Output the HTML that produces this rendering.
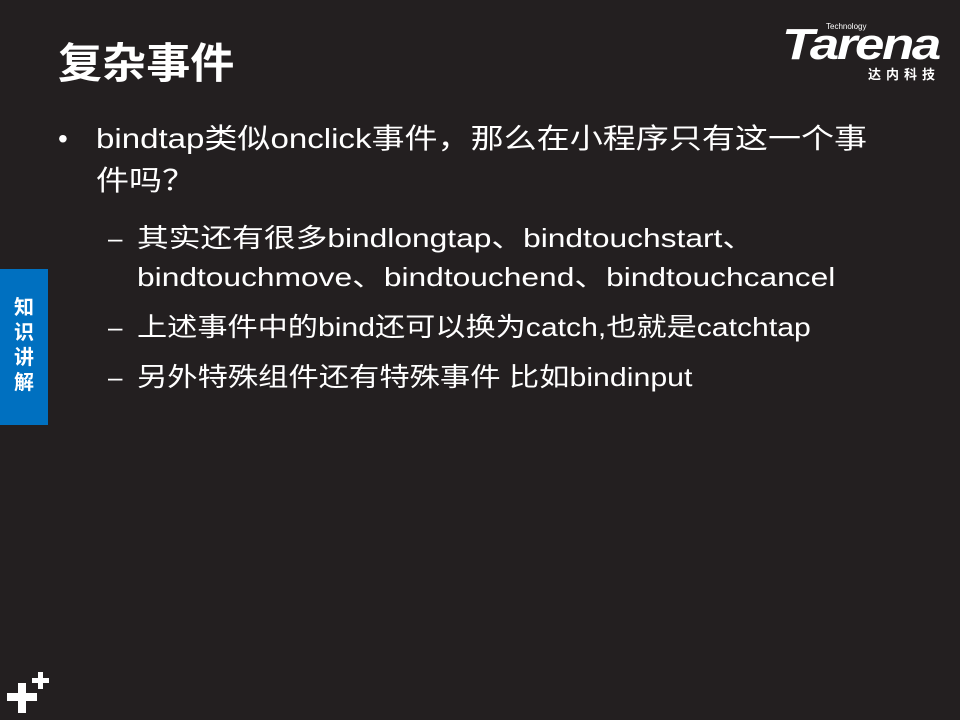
<!DOCTYPE html><html><head><meta charset="utf-8"><style>
html,body{margin:0;padding:0}
body{width:960px;height:720px;background:#231f20;position:relative;overflow:hidden;font-family:"Liberation Sans","Noto Sans CJK SC",sans-serif;color:#fff}
.a{position:absolute;white-space:nowrap}
.t{left:58px;top:38px;font-size:42px;font-weight:bold;line-height:52px;transform:scaleX(1.05);transform-origin:left}
.b{font-size:28px;line-height:38px;transform:scaleX(1.18);transform-origin:left}
.s{font-size:26px;line-height:38px;transform:scaleX(1.22);transform-origin:left}
</style></head><body>
<div class="a t">复杂事件</div>
<div class="a" style="left:782px;top:20px;width:165px;height:60px">
<div class="a" style="left:44px;top:2px;font-size:8px">Technology</div>
<div class="a" style="left:0;top:2px;font-size:44px;font-weight:bold;font-style:italic;letter-spacing:-2px;line-height:46px;transform:scaleX(1.2);transform-origin:left">Tarena</div>
<div class="a" style="left:86px;top:44px;font-size:13px;font-weight:bold;letter-spacing:5px">达内科技</div>
</div>
<div class="a" style="left:58px;top:120px;font-size:28px;line-height:38px">•</div>
<div class="a b" style="left:96px;top:120px">bindtap类似onclick事件，那么在小程序只有这一个事</div>
<div class="a b" style="left:96px;top:162px">件吗？</div>
<div class="a" style="left:108px;top:219px;font-size:26px;line-height:38px">–</div>
<div class="a s" style="left:137px;top:219px">其实还有很多bindlongtap、bindtouchstart、</div>
<div class="a s" style="left:137px;top:258px">bindtouchmove、bindtouchend、bindtouchcancel</div>
<div class="a" style="left:108px;top:308px;font-size:26px;line-height:38px">–</div>
<div class="a s" style="left:137px;top:308px;transform:scaleX(1.16)">上述事件中的bind还可以换为catch,也就是catchtap</div>
<div class="a" style="left:108px;top:358px;font-size:26px;line-height:38px">–</div>
<div class="a s" style="left:137px;top:358px;transform:scaleX(1.165)">另外特殊组件还有特殊事件 比如bindinput</div>
<div class="a" style="left:0;top:269px;width:48px;height:156px;background:#0070c0"></div>
<div class="a" style="left:13px;top:296px;width:22px;font-size:20px;font-weight:bold;line-height:25px;white-space:normal;text-align:center">知识讲解</div>
<div class="a" style="left:0;top:660px;width:60px;height:60px"><svg width="60" height="60" style="display:block"><path d="M7 693h30v8H7zM18 683h8v30h-8zM32 678h17v5H32zM38 672h5v17h-5z" transform="translate(0,-660)" fill="#fff"/></svg></div>
</body></html>
